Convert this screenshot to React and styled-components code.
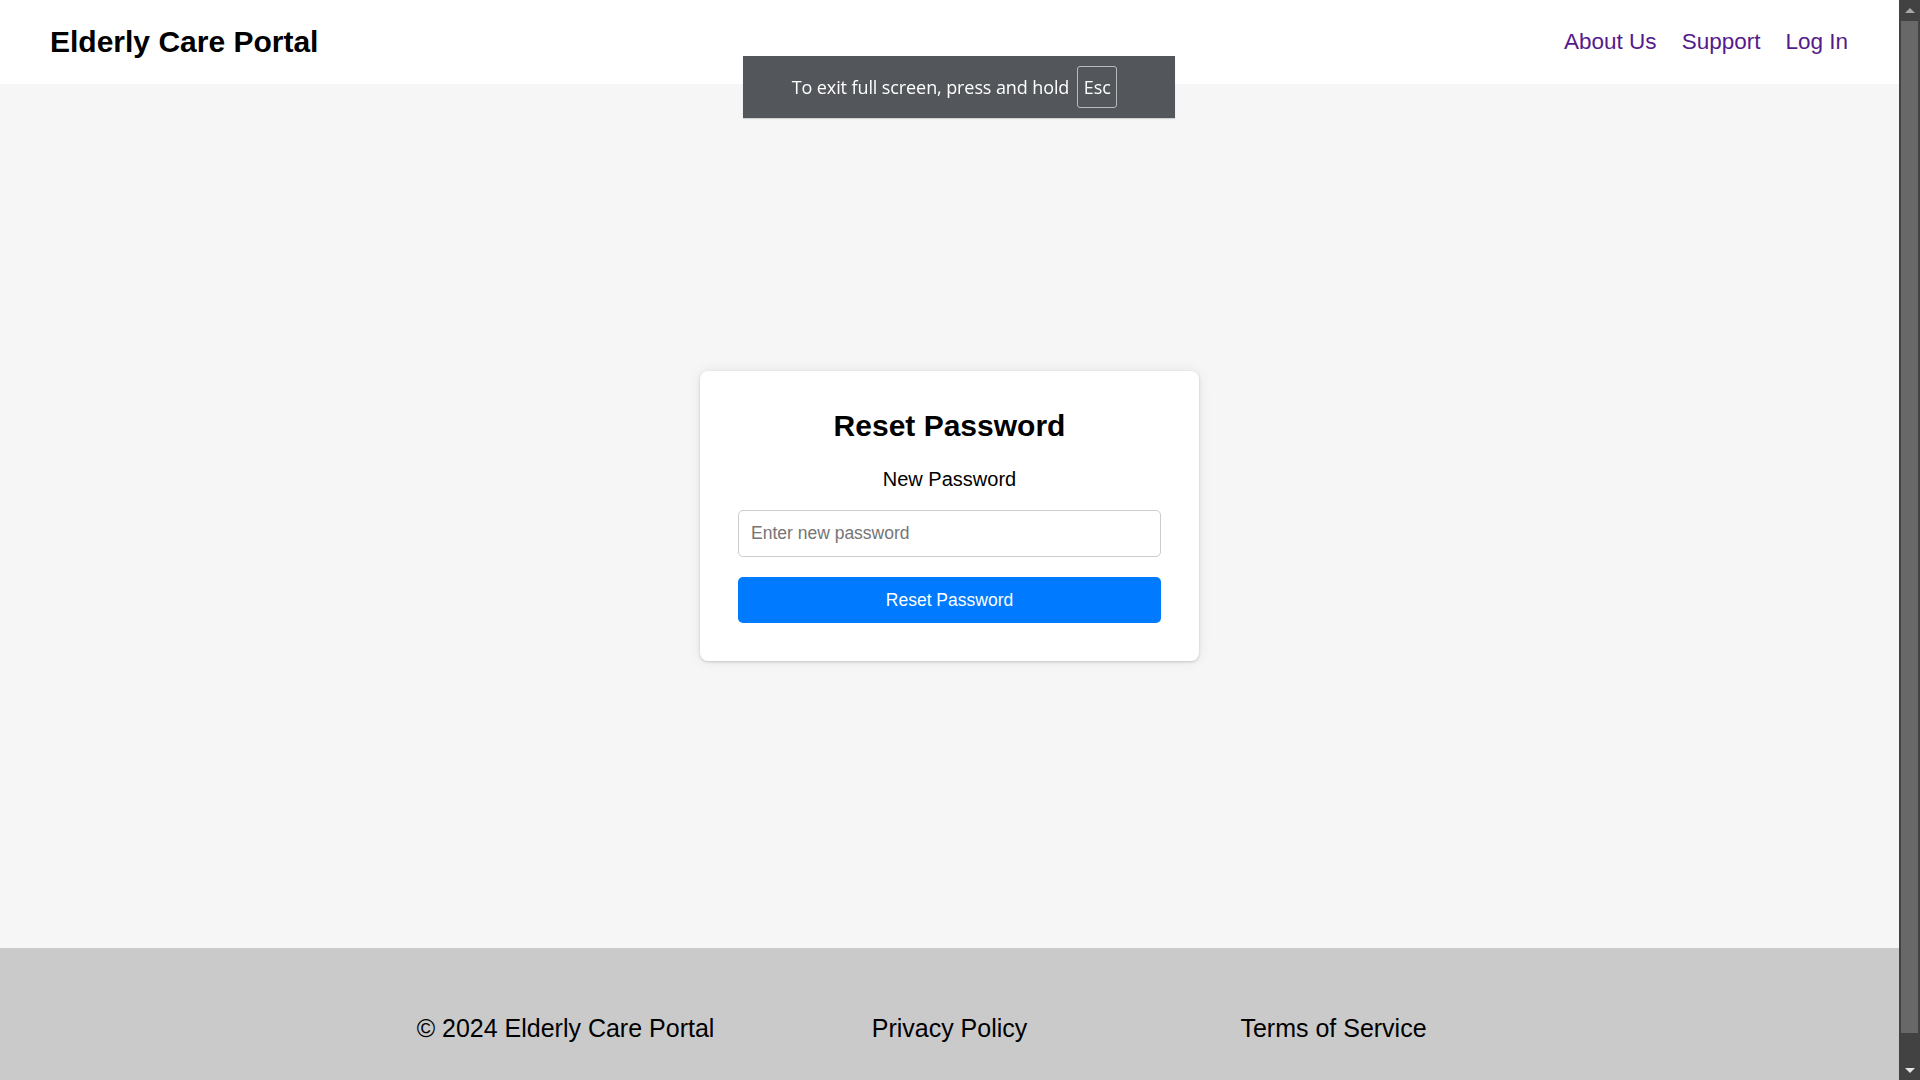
import React from 'react';
import styled, { createGlobalStyle } from 'styled-components';

const GlobalStyle = createGlobalStyle`
    html, body {
        margin: 0;
        padding: 0;
        background: #f6f6f6;
        font-family: "Liberation Sans", Arial, sans-serif;
    }
`;

const Page = styled.div`
    display: flex;
    flex-direction: column;
    min-height: 1116px;
    margin-right: 21px;
`;

const Header = styled.header`
    display: flex;
    align-items: center;
    justify-content: space-between;
    height: 84px;
    padding: 0 51px 0 50px;
    background: #ffffff;
`;

const Brand = styled.h1`
    margin: 0;
    font-size: 30px;
    font-weight: bold;
    color: #000;
`;

const Nav = styled.nav`
    display: flex;
    gap: 25px;
`;

const NavLink = styled.a`
    font-size: 22.5px;
    color: #551a8b;
    text-decoration: none;
    cursor: pointer;
`;

const Main = styled.main`
    display: flex;
    align-items: center;
    justify-content: center;
    height: 864px;
`;

const Card = styled.div`
    box-sizing: border-box;
    width: 499px;
    padding: 38px;
    background: #fff;
    border-radius: 8px;
    box-shadow: 0 1px 3px rgba(0, 0, 0, 0.18), 0 0 14px rgba(0, 0, 0, 0.07);
    text-align: center;
`;

const Title = styled.h2`
    margin: 0 0 25px;
    font-size: 30px;
    line-height: 34px;
    font-weight: bold;
    color: #000;
`;

const Label = styled.label`
    display: block;
    font-size: 20px;
    line-height: 23px;
    margin-bottom: 19px;
    color: #000;
`;

const Input = styled.input`
    display: block;
    box-sizing: border-box;
    width: 100%;
    height: 47px;
    padding: 0 12px;
    border: 1px solid #cccccc;
    border-radius: 5px;
    font-family: "Liberation Sans", Arial, sans-serif;
    font-size: 17.5px;
    outline: none;
    &::placeholder {
        color: #757575;
    }
`;

const Button = styled.button`
    display: block;
    width: 100%;
    height: 46px;
    margin-top: 20px;
    border: none;
    border-radius: 5px;
    background: #007bff;
    color: #fff;
    font-family: "Liberation Sans", Arial, sans-serif;
    font-size: 17.5px;
    cursor: pointer;
`;

const Footer = styled.footer`
    flex: 1;
    display: flex;
    justify-content: center;
    padding-top: 66px;
    background: #cacaca;
`;

const FooterRow = styled.div`
    display: grid;
    grid-template-columns: repeat(3, 384px);
    height: 29px;
`;

const FooterItem = styled.p`
    margin: 0;
    font-size: 25px;
    line-height: 29px;
    text-align: center;
    color: #000;
`;

const Notice = styled.div`
    position: fixed;
    top: 56px;
    left: 743px;
    width: 432px;
    height: 62px;
    box-sizing: border-box;
    display: flex;
    align-items: center;
    justify-content: center;
    gap: 8px;
    padding-right: 9px;
    background: #53565a;
    color: #fff;
    font-family: "Open Sans", "Noto Sans", sans-serif;
    font-size: 18px;
    letter-spacing: -0.1px;
    box-shadow: 0 1px 1px rgba(0, 0, 0, 0.15);
`;

const Key = styled.span`
    display: inline-flex;
    align-items: center;
    justify-content: center;
    width: 40px;
    height: 42px;
    box-sizing: border-box;
    border: 1px solid #b9babc;
    border-radius: 3px;
`;

/* browser scrollbar, drawn over the right edge */
const ScrollBar = styled.div`
    position: fixed;
    top: 0;
    right: 0;
    width: 21px;
    height: 100vh;
    display: flex;
    flex-direction: column;
    background: #424242;
`;

const ScrollButton = styled.div`
    display: flex;
    align-items: center;
    justify-content: center;
    height: 20px;
    flex-shrink: 0;
    &::before {
        content: "";
        border-left: 5px solid transparent;
        border-right: 5px solid transparent;
        ${props => props.down
            ? 'border-top: 5px solid #e6e6e6;'
            : 'border-bottom: 5px solid #a8a8a8;'}
    }
`;

const Track = styled.div`
    flex: 1;
    padding: 1px 2px 0 2px;
`;

const Thumb = styled.div`
    height: 1012px;
    background: #686868;
`;

export default function App() {
    return (
        <>
            <GlobalStyle />
            <Page>
                <Header>
                    <Brand>Elderly Care Portal</Brand>
                    <Nav>
                        <NavLink>About Us</NavLink>
                        <NavLink>Support</NavLink>
                        <NavLink>Log In</NavLink>
                    </Nav>
                </Header>
                <Main>
                    <Card>
                        <Title>Reset Password</Title>
                        <Label htmlFor="new-password">New Password</Label>
                        <Input id="new-password" type="password" placeholder="Enter new password" />
                        <Button>Reset Password</Button>
                    </Card>
                </Main>
                <Footer>
                    <FooterRow>
                        <FooterItem>© 2024 Elderly Care Portal</FooterItem>
                        <FooterItem>Privacy Policy</FooterItem>
                        <FooterItem>Terms of Service</FooterItem>
                    </FooterRow>
                </Footer>
            </Page>
            <Notice>
                <span>To exit full screen, press and hold</span>
                <Key>Esc</Key>
            </Notice>
            <ScrollBar>
                <ScrollButton />
                <Track>
                    <Thumb />
                </Track>
                <ScrollButton down />
            </ScrollBar>
        </>
    );
}
